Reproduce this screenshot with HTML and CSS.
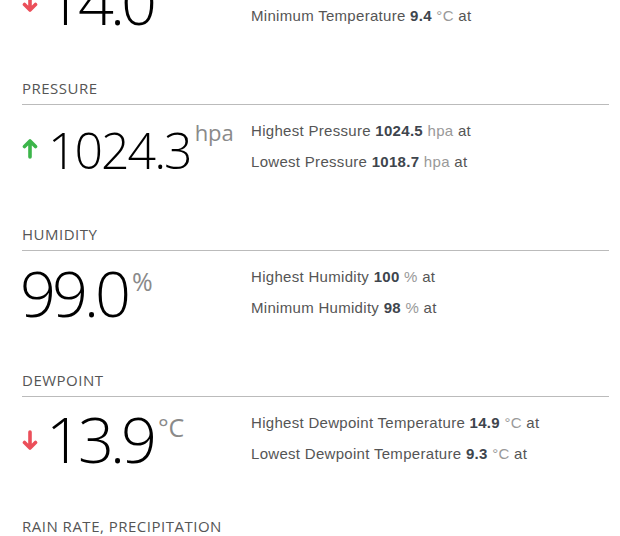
FILE: index.html
```html
<!DOCTYPE html>
<html lang="en">

<head>
    <meta charset="UTF-8">
    <meta name="viewport" content="width=device-width, initial-scale=1.0">
    <title>Weather station</title>
    <link rel="stylesheet" href="styles.css">
</head>

<body>
    <div class="stats">
        <div class="section">
            <div class="section-title">Temperature</div>
            <div class="section-body">
                <div class="reading">
                    <span class="trend">
                        <svg class="arrow down" viewBox="0 0 16 21"><path d="M8 2 V18 M2.5 12.5 L8 18 L13.5 12.5" /></svg>
                    </span>
                    <span class="value">14.0</span>
                    <span class="unit">&deg;C</span>
                </div>
                <div class="details">
                    <div>Highest Temperature <b>15.2</b> <span class="muted">&deg;C</span> at</div>
                    <div>Minimum Temperature <b>9.4</b> <span class="muted">&deg;C</span> at</div>
                </div>
            </div>
        </div>

        <div class="section">
            <div class="section-title">Pressure</div>
            <div class="section-body">
                <div class="reading">
                    <span class="trend">
                        <svg class="arrow up" viewBox="0 0 16 21"><path d="M8 19 V3 M2.5 8.5 L8 3 L13.5 8.5" /></svg>
                    </span>
                    <span class="value small">1024.3</span>
                    <span class="unit">hpa</span>
                </div>
                <div class="details">
                    <div>Highest Pressure <b>1024.5</b> <span class="muted">hpa</span> at</div>
                    <div>Lowest Pressure <b>1018.7</b> <span class="muted">hpa</span> at</div>
                </div>
            </div>
        </div>

        <div class="section">
            <div class="section-title">Humidity</div>
            <div class="section-body">
                <div class="reading">
                    <span class="value">99.0</span>
                    <span class="unit">%</span>
                </div>
                <div class="details">
                    <div>Highest Humidity <b>100</b> <span class="muted">%</span> at</div>
                    <div>Minimum Humidity <b>98</b> <span class="muted">%</span> at</div>
                </div>
            </div>
        </div>

        <div class="section">
            <div class="section-title">Dewpoint</div>
            <div class="section-body">
                <div class="reading">
                    <span class="trend">
                        <svg class="arrow down" viewBox="0 0 16 21"><path d="M8 2 V18 M2.5 12.5 L8 18 L13.5 12.5" /></svg>
                    </span>
                    <span class="value">13.9</span>
                    <span class="unit">&deg;C</span>
                </div>
                <div class="details">
                    <div>Highest Dewpoint Temperature <b>14.9</b> <span class="muted">&deg;C</span> at</div>
                    <div>Lowest Dewpoint Temperature <b>9.3</b> <span class="muted">&deg;C</span> at</div>
                </div>
            </div>
        </div>

        <div class="section">
            <div class="section-title">Rain rate, precipitation</div>
        </div>
    </div>
</body>

</html>
```

FILE: styles.css
```css
body {
    margin: 0;
    background: #fff;
    font-family: 'Open Sans', sans-serif;
    color: #555;
    overflow: hidden;
}

.stats {
    margin-top: -68px;
}

.section {
    padding: 0 11px 0 22px;
}

.section-title {
    font-size: 15px;
    line-height: 20px;
    letter-spacing: 0.5px;
    text-transform: uppercase;
    color: #555;
    padding-bottom: 6px;
    border-bottom: 1px solid #bbb;
}

.section-body {
    display: flex;
    height: 119px;
}

.reading {
    width: 229px;
    display: flex;
    align-items: flex-start;
}

.trend {
    width: 26px;
    padding-top: 33px;
}

.arrow {
    display: block;
    width: 16px;
    height: 21px;
    fill: none;
    stroke-width: 3.6;
    stroke-linecap: round;
    stroke-linejoin: round;
}

.arrow.up {
    stroke: #3cb54a;
}

.arrow.down {
    stroke: #eb4f5a;
}

.value {
    font-weight: 300;
    font-size: 63px;
    line-height: 63px;
    color: #000;
    letter-spacing: -4px;
    margin: 10px 0 0 -2px;
}

.value.small {
    font-size: 50px;
    line-height: 50px;
    letter-spacing: -2px;
    margin: 20px 0 0;
}

.unit {
    font-size: 25px;
    line-height: 22px;
    color: #8a8a8a;
    margin: 19px 0 0 5px;
}

.value.small + .unit {
    font-size: 22px;
    margin: 16px 0 0 4px;
}

.details {
    font-family: 'Liberation Sans', Arial, sans-serif;
    font-size: 15px;
    line-height: 31px;
    letter-spacing: 0.3px;
    color: #555;
    padding-top: 10px;
}

.details b {
    color: #3e454d;
}

.muted {
    color: #999;
}
```
